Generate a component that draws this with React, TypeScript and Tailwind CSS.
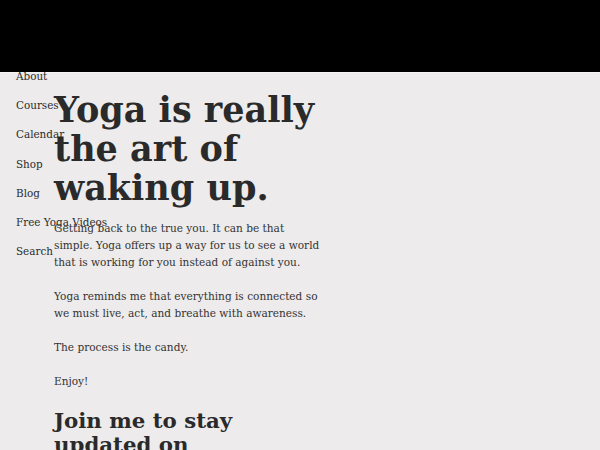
import React from "react";

const nav = ["About", "Courses", "Calendar", "Shop", "Blog", "Free Yoga Videos", "Search"];

export default function App() {
  return (
    <div
      className="relative min-h-[450px] w-[600px] overflow-hidden bg-[#edebeb] text-[#2d2d2d]"
      style={{ fontFamily: '"DejaVu Serif", serif' }}
    >
      <header className="h-[73px] border-b border-[#f6f5f5] bg-black" />
      <nav className="absolute left-[16px] top-[62px]">
        <ul className="flex flex-col">
          {nav.map((n) => (
            <li key={n} className="text-[10.4px] leading-[29.17px] text-[#2b2b2b]">
              {n}
            </li>
          ))}
        </ul>
      </nav>
      <main className="w-[320px] pl-[54px] pt-[17px]">
        <h1 className="text-[35px] font-bold leading-[39px] text-[#2a2a2a]">
          Yoga is really the art of waking up.
        </h1>
        <div className="mt-[13px] text-[10.55px] leading-[17px] text-[#333]">
          <p>Getting back to the true you. It can be that simple. Yoga offers up a way for us to see a world that is working for you instead of against you.</p>
          <p className="mt-[17px]">Yoga reminds me that everything is connected so we must live, act, and breathe with awareness.</p>
          <p className="mt-[17px]">The process is the candy.</p>
          <p className="mt-[17px]">Enjoy!</p>
        </div>
        <h2 className="mt-[19px] text-[21.3px] font-bold leading-[24px] text-[#2a2a2a]">
          Join me to stay updated on
        </h2>
      </main>
    </div>
  );
}
